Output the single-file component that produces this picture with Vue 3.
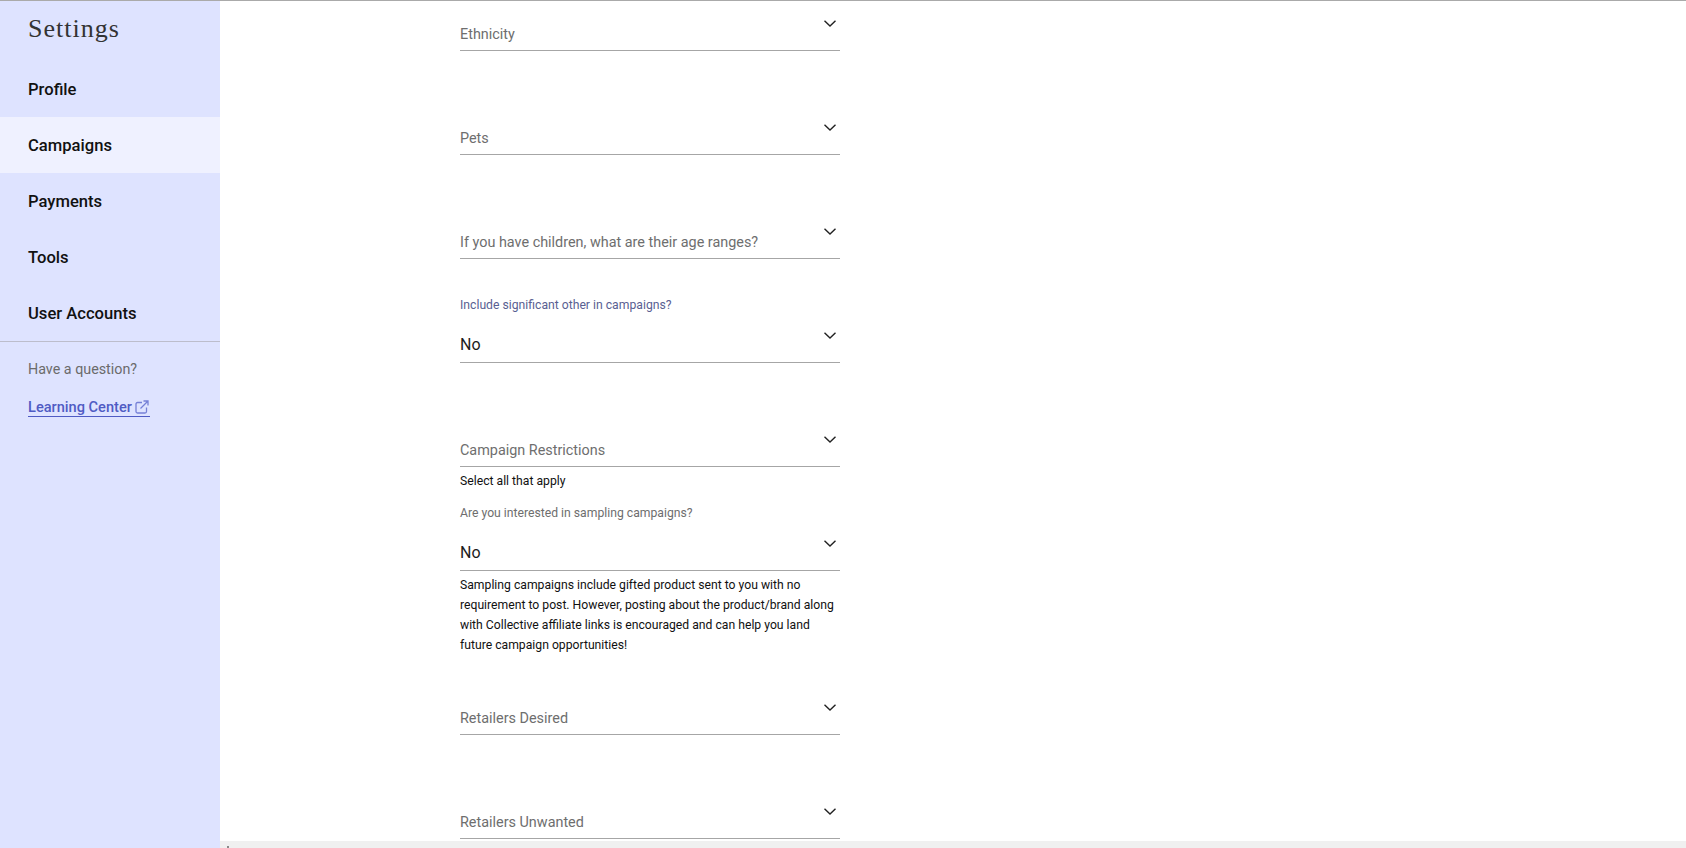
<script setup>
const navItems = [
  { label: 'Profile' },
  { label: 'Campaigns', active: true },
  { label: 'Payments' },
  { label: 'Tools' },
  { label: 'User Accounts' }
]
const paragraph = 'Sampling campaigns include gifted product sent to you with no requirement to post. However, posting about the product/brand along with Collective affiliate links is encouraged and can help you land future campaign opportunities!'
</script>

<template>
  <div class="page">
    <aside class="sidebar">
      <h1 class="title">Settings</h1>
      <nav class="nav">
        <a v-for="item in navItems" :key="item.label" class="nav-item" :class="{ active: item.active }">{{ item.label }}</a>
      </nav>
      <div class="help">
        <p class="question">Have a question?</p>
        <a class="learn">Learning Center<svg class="ext" viewBox="0 0 14 14" width="14" height="14" fill="none" stroke="currentColor" stroke-width="1.300"><path d="M7 2.500H2.500A1.500 1.500 0 0 0 1 4v7.500A1.500 1.500 0 0 0 2.500 13H10a1.500 1.500 0 0 0 1.500-1.500V7.500"/><path d="M5.500 8.500 13 1M8.500 1H13v4.500"/></svg></a>
      </div>
    </aside>
    <div class="content">
      <main class="main">
        <div class="form">
          <div class="select"><span class="placeholder">Ethnicity</span><svg class="chev" viewBox="0 0 12 7" width="12" height="7"><path d="M.5.8 6 6 11.500.8" fill="none" stroke="#222" stroke-width="1.400"/></svg></div>
          <div class="select gap"><span class="placeholder">Pets</span><svg class="chev" viewBox="0 0 12 7" width="12" height="7"><path d="M.5.8 6 6 11.500.8" fill="none" stroke="#222" stroke-width="1.400"/></svg></div>
          <div class="select gap"><span class="placeholder">If you have children, what are their age ranges?</span><svg class="chev" viewBox="0 0 12 7" width="12" height="7"><path d="M.5.8 6 6 11.500.8" fill="none" stroke="#222" stroke-width="1.400"/></svg></div>
          <label class="label accent">Include significant other in campaigns?</label>
          <div class="select"><span class="value">No</span><svg class="chev" viewBox="0 0 12 7" width="12" height="7"><path d="M.5.8 6 6 11.500.8" fill="none" stroke="#222" stroke-width="1.400"/></svg></div>
          <div class="select gap"><span class="placeholder">Campaign Restrictions</span><svg class="chev" viewBox="0 0 12 7" width="12" height="7"><path d="M.5.8 6 6 11.500.8" fill="none" stroke="#222" stroke-width="1.400"/></svg></div>
          <p class="hint">Select all that apply</p>
          <label class="label second">Are you interested in sampling campaigns?</label>
          <div class="select"><span class="value">No</span><svg class="chev" viewBox="0 0 12 7" width="12" height="7"><path d="M.5.8 6 6 11.500.8" fill="none" stroke="#222" stroke-width="1.400"/></svg></div>
          <p class="hint para">{{ paragraph }}</p>
          <div class="select after-para"><span class="placeholder">Retailers Desired</span><svg class="chev" viewBox="0 0 12 7" width="12" height="7"><path d="M.5.8 6 6 11.500.8" fill="none" stroke="#222" stroke-width="1.400"/></svg></div>
          <div class="select gap"><span class="placeholder">Retailers Unwanted</span><svg class="chev" viewBox="0 0 12 7" width="12" height="7"><path d="M.5.8 6 6 11.500.8" fill="none" stroke="#222" stroke-width="1.400"/></svg></div>
        </div>
      </main>
      <div class="hscroll"><span class="arrow"></span></div>
    </div>
  </div>
</template>

<style>
html, body { margin: 0; overflow: hidden; background: #fff; }
</style>

<style scoped>
.page {
  height: 847px;
  border-top: 1px solid #aaa;
  display: flex;
  font-family: Roboto, "Liberation Sans", sans-serif;
  overflow: hidden;
}
.sidebar {
  width: 220px;
  flex: none;
  background: #dee3ff;
}
.title {
  margin: 0;
  padding: 12px 0 0 28px;
  height: 48px;
  font: 400 26px/32px "Liberation Serif", serif;
  letter-spacing: 1px;
  color: #333;
}
.nav { border-bottom: 1px solid #bcbdcc; }
.nav-item {
  display: flex;
  align-items: center;
  height: 56px;
  padding-left: 28px;
  font-size: 16.6px;
  font-weight: 500;
  color: #111;
}
.nav-item.active { background: #eff1ff; }
.help { padding: 0 28px; }
.question {
  margin: 17px 0 0;
  font-size: 14.3px;
  line-height: 20px;
  color: #6b6b6b;
}
.learn {
  display: inline-flex;
  align-items: center;
  gap: 3px;
  margin-top: 19px;
  font-size: 14.6px;
  font-weight: 500;
  line-height: 18px;
  color: #4f5bc4;
  border-bottom: 1px solid #4f5bc4;
}
.ext { color: #7580d6; margin-right: 1px; }
.content {
  flex: 1;
  min-width: 0;
  display: flex;
  flex-direction: column;
}
.main { flex: 1; min-height: 0; overflow: hidden; }
.hscroll {
  height: 7px;
  flex: none;
  background: #f0f0f0;
  position: relative;
}
.arrow {
  position: absolute;
  left: 7px;
  bottom: 0;
  width: 2px;
  height: 2px;
  background: #8a8a8a;
}
.form {
  width: 380px;
  margin-left: 240px;
  padding-top: 9px;
}
.select {
  height: 40px;
  border-bottom: 1px solid #a6a6a6;
  display: flex;
  align-items: flex-end;
  justify-content: space-between;
}
.select.gap { margin-top: 63px; }
.select.after-para { margin-top: 39px; }
.placeholder {
  font-size: 14.4px;
  line-height: 20px;
  padding-bottom: 5px;
  color: #6e6e6e;
}
.value {
  font-size: 16px;
  line-height: 22px;
  padding-bottom: 6px;
  color: #1c1c1c;
}
.chev {
  align-self: flex-start;
  margin: 10px 4px 0 0;
}
.label {
  display: block;
  font-size: 12.2px;
  line-height: 18px;
  color: #6e6e6e;
}
.label.accent { margin-top: 37px; margin-bottom: 8px; color: #5a5f92; }
.label.second { margin-top: 13px; margin-bottom: 8px; }
.hint {
  margin: 4px 0 0;
  font-size: 12.2px;
  line-height: 20px;
  color: #111;
}
</style>
